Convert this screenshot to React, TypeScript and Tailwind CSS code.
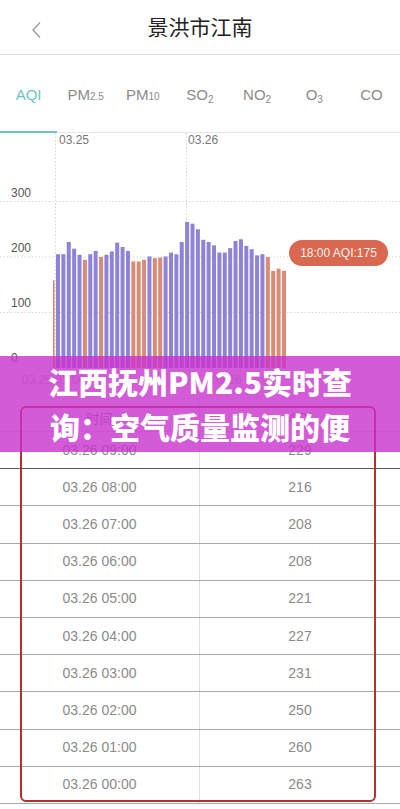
import React from "react";

const tabs = [
  { main: "AQI", sub: "", low: false },
  { main: "PM", sub: "2.5", low: false },
  { main: "PM", sub: "10", low: false },
  { main: "SO", sub: "2", low: true },
  { main: "NO", sub: "2", low: true },
  { main: "O", sub: "3", low: true },
  { main: "CO", sub: "", low: false },
];

// hourly AQI, 03.25 00:00 -> 03.26 18:00
const hourly = [
  205, 205, 227, 215, 204, 195, 205, 211, 200, 204, 210, 226, 218, 211, 192, 192, 195, 201, 198,
  199, 201, 208, 205, 227, 263, 260, 250, 231, 227, 221, 208, 208, 216, 229, 232, 220, 214, 203,
  205, 200, 175, 179, 175,
];

const rows = [
  ["03.26 09:00", 229],
  ["03.26 08:00", 216],
  ["03.26 07:00", 208],
  ["03.26 06:00", 208],
  ["03.26 05:00", 221],
  ["03.26 04:00", 227],
  ["03.26 03:00", 231],
  ["03.26 02:00", 250],
  ["03.26 01:00", 260],
  ["03.26 00:00", 263],
] as const;

const BASE = 235;
const SCALE = 0.555;
const PITCH = 5.38;

function barColor(v: number) {
  return v > 200 ? "#8e83d6" : "#d98b76";
}

function Chart() {
  return (
    <div className="relative h-[265px] overflow-hidden">
      <svg width={400} height={265} className="absolute left-0 top-0">
        {[300, 200, 100].map((v) => (
          <line
            key={v}
            x1={0}
            x2={400}
            y1={BASE - v * SCALE}
            y2={BASE - v * SCALE}
            stroke="#d6d6d6"
            strokeWidth={1}
            strokeDasharray="1.5 2"
          />
        ))}
        {[55.5, 186.5].map((x) => (
          <line key={x} x1={x} x2={x} y1={0} y2={BASE} stroke="#d6d6d6" strokeDasharray="1.5 2" />
        ))}
        <clipPath id="plot">
          <rect x={53} y={0} width={347} height={265} />
        </clipPath>
        <g clipPath="url(#plot)">
          <rect x={56 - PITCH} y={BASE - 158 * SCALE} width={4} height={158 * SCALE} fill="#d98b76" />
          {hourly.map((v, i) => (
            <rect
              key={i}
              x={56 + i * PITCH}
              y={BASE - v * SCALE}
              width={4}
              height={v * SCALE}
              fill={barColor(v)}
            />
          ))}
        </g>
      </svg>

      {/* date labels over the plot */}
      <div className="relative flex h-[14px] text-[12px] leading-[14px] text-[#777]">
        <span className="ml-[59px]">03.25</span>
        <span className="ml-[99px]">03.26</span>
      </div>

      {/* y axis */}
      <div className="relative ml-[11px] mt-[39px] flex flex-col gap-[41px] text-[12px] leading-[14px] text-[#555]">
        <span>300</span>
        <span>200</span>
        <span>100</span>
        <span>0</span>
      </div>

      <div className="relative mt-[8px] flex text-[12px] leading-[14px] text-[#c4c4c4]">
        <span className="ml-[22px]">03.25 01:00</span>
        <span className="ml-[126px]">03.26 07:00</span>
      </div>

      <div className="absolute left-[289px] top-[107px] flex h-[26px] w-[99px] items-center justify-center rounded-[13px] bg-[#d8684f] text-[12px] text-[#fdf1ee]">
        18:00 AQI:175
      </div>
    </div>
  );
}

export default function App() {
  return (
    <div className="relative h-[809px] w-[400px] overflow-hidden bg-white font-['Liberation_Sans','Noto_Sans_CJK_SC',sans-serif]">
      <div className="relative flex h-[55px] items-center justify-center border-b border-[#dcdcdc]">
        <svg className="absolute left-[30px] top-[21px]" width={14} height={18} viewBox="0 0 14 18">
          <polyline points="10,1.5 3,9 10,16.5" fill="none" stroke="#9a9a9a" strokeWidth={1.3} />
        </svg>
        <span className="text-[21px] text-[#222] font-['Noto_Sans_CJK_SC',sans-serif]">景洪市江南</span>
      </div>

      <div className="relative grid h-[78px] grid-cols-7 border-b border-[#e6e6e6]">
        {tabs.map((t, i) => (
          <div
            key={i}
            className={`flex items-start justify-center pt-[30px] text-[15px] leading-[20px] ${
              i === 0 ? "text-[#6cc4c4]" : "text-[#8a8a8a]"
            }`}
          >
            <span>
              {t.main}
              {t.sub && (
                <span className={`text-[10px] ${t.low ? "relative top-[3px]" : ""}`}>{t.sub}</span>
              )}
            </span>
          </div>
        ))}
        <div className="absolute bottom-[-1px] left-0 h-[2px] w-[57px] bg-[#6cc4c4]" />
      </div>

      <Chart />

      <div className="grid h-[34px] grid-cols-2 border-b border-[#e0e0e0] text-[13px] text-[#888]">
        <div className="flex items-center justify-center border-r border-[#e0e0e0] pt-[6px] font-['Noto_Sans_CJK_SC',sans-serif]">
          时间
        </div>
        <div className="flex items-center justify-center pt-[6px]">AQI</div>
      </div>
      {rows.map(([time, v], i) => (
        <div
          key={time}
          className={`grid h-[37.2px] grid-cols-2 border-b text-[14px] text-[#8a8a8a] ${
            i === 0 ? "border-[#5a5a5a]" : "border-[#a8a8a8]"
          }`}
        >
          <div className="flex items-center justify-center border-r border-[#e0e0e0]">{time}</div>
          <div className="flex items-center justify-center">{v}</div>
        </div>
      ))}

      <div className="absolute left-[20px] top-[406px] h-[396px] w-[356px] rounded-[6px] border-2 border-[#b5302c]" />

      <div className="absolute left-0 top-[356px] flex h-[96px] w-full flex-col items-center justify-center bg-[rgba(200,50,205,0.8)] text-[30px] font-black leading-[45px] text-white font-['Noto_Sans_CJK_SC',sans-serif]">
        <span>江西抚州PM2.5实时查</span>
        <span>询：空气质量监测的便</span>
      </div>
    </div>
  );
}
